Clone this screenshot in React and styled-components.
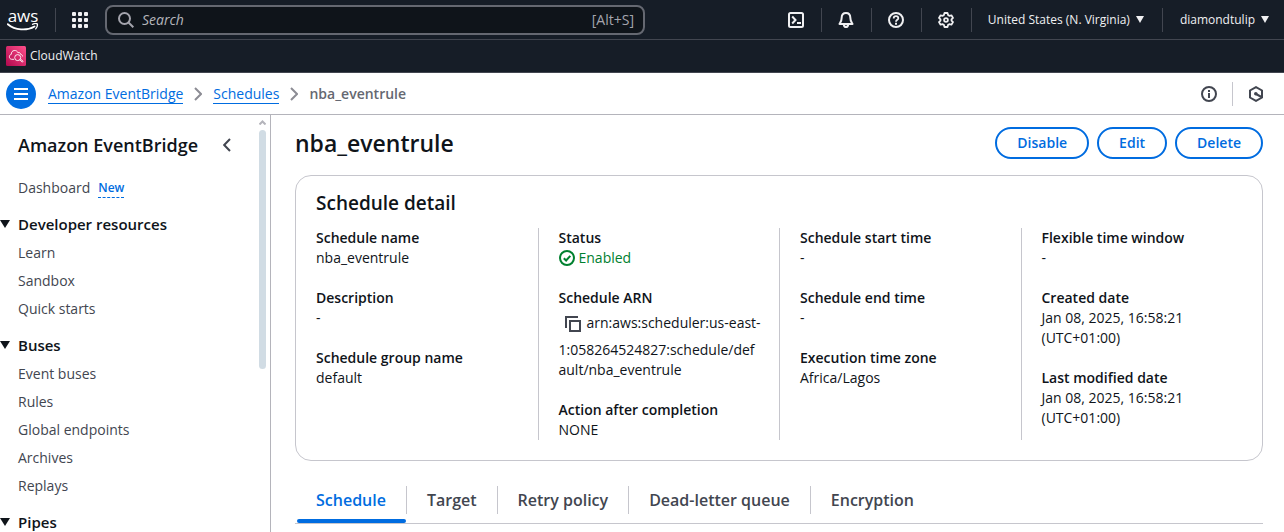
import React from 'react';
import styled, { createGlobalStyle, css } from 'styled-components';

const color = {
  nav: '#161d27',
  navLine: '#424650',
  navText: '#f0f0f2',
  blue: '#006ce0',
  text: '#0f141a',
  soft: '#424650',
  line: '#b4b4bb',
  cardLine: '#c6c6cd',
  green: '#00802f',
};

const GlobalStyle = createGlobalStyle`
  *, *::before, *::after { box-sizing: border-box; }
  body {
    margin: 0;
    background: #fff;
    color: ${color.text};
    font-family: "Open Sans", "Noto Sans", sans-serif;
    font-size: 14px;
    line-height: 20px;
  }
  h1, h2, ul, ol, dl, dd { margin: 0; padding: 0; }
  ul, ol { list-style: none; }
  button { font: inherit; color: inherit; background: none; border: 0; padding: 0; cursor: pointer; }
  a { color: inherit; text-decoration: none; }
  svg { display: block; flex: none; }
`;

const Page = styled.div`
  display: flex;
  flex-direction: column;
  height: 100vh;
  overflow: hidden;
`;

const TopNav = styled.header`
  display: flex;
  align-items: center;
  flex: none;
  height: 40px;
  padding: 0 7px;
  background: ${color.nav};
  border-bottom: 1px solid ${color.navLine};
  color: ${color.navText};
`;

const Logo = styled.a`
  display: flex;
  flex-direction: column;
  align-items: center;
  width: 32px;
  margin-right: 16px;
  font-size: 17px;
  font-weight: 500;
  line-height: 14px;
  color: #fff;
`;

const Rule = styled.span`
  flex: none;
  width: 1px;
  height: 24px;
  background: ${(p) => (p.$light ? color.cardLine : color.navLine)};
`;

const GridButton = styled.button`
  margin: 0 17px 0 16px;
`;

const SearchBox = styled.label`
  display: flex;
  align-items: center;
  flex: 0 1 540px;
  height: 30px;
  padding: 0 9px 0 11px;
  gap: 8px;
  border: 2px solid #656871;
  border-radius: 8px;
  background: #0f141a;
  color: #a4a4ad;
`;

const SearchInput = styled.input`
  flex: 1;
  min-width: 0;
  padding: 0;
  border: 0;
  outline: 0;
  background: none;
  font: inherit;
  color: inherit;
  &::placeholder { color: #b4b4bb; font-style: italic; opacity: 1; }
`;

const NavTools = styled.div`
  display: flex;
  align-items: center;
  margin-left: auto;
`;

const IconButton = styled.button`
  display: grid;
  place-items: center;
  width: 49px;
  height: 32px;
`;

const NavMenu = styled.button`
  display: flex;
  align-items: center;
  gap: 6px;
  padding: ${(p) => (p.$last ? '0 8px 0 17px' : '0 18px 0 16px')};
  font-size: 12px;
  font-weight: 500;
  white-space: nowrap;
`;

const Favorites = styled.nav`
  display: flex;
  align-items: center;
  flex: none;
  height: 33px;
  padding: 0 6px;
  background: ${color.nav};
  border-bottom: 1px solid ${color.navLine};
`;

const Favorite = styled.a`
  display: flex;
  align-items: center;
  gap: 4px;
  color: ${color.navText};
  font-size: 12px;
  font-weight: 500;
`;

const CrumbBar = styled.div`
  display: flex;
  align-items: center;
  flex: none;
  height: 42px;
  padding: 0 20px 0 6px;
  border-bottom: 1px solid ${color.line};
  color: ${color.soft};
`;

const MenuButton = styled.button`
  display: grid;
  place-items: center;
  width: 30px;
  height: 30px;
  margin-right: 12px;
  border-radius: 50%;
  background: ${color.blue};
`;

const Crumbs = styled.ol`
  display: flex;
  align-items: center;
  flex: 1;
  gap: 11px;
`;

const Crumb = styled.li`
  display: flex;
  align-items: center;
  gap: 11px;
  color: #656871;
  font-weight: 600;
  a {
    color: ${color.blue};
    font-weight: 400;
    line-height: 19px;
    border-bottom: 1px solid ${color.blue};
  }
`;

const CrumbTools = styled.div`
  display: flex;
  align-items: center;
  gap: 15px;
`;

const Body = styled.div`
  display: flex;
  flex: 1;
  min-height: 0;
`;

const Sidebar = styled.aside`
  display: flex;
  flex: none;
  width: 271px;
  border-right: 1px solid ${color.line};
`;

const SideContent = styled.nav`
  flex: 1;
  min-width: 0;
  overflow: hidden;
  padding-top: 18px;
`;

const SideHead = styled.div`
  display: flex;
  align-items: center;
  justify-content: space-between;
  height: 24px;
  padding: 0 28px 0 18px;
  margin-bottom: 21px;
  font-size: 18px;
  font-weight: 600;
  white-space: nowrap;
`;

const SideLink = styled.a`
  display: flex;
  align-items: center;
  gap: 8px;
  height: 20px;
  margin: 0 18px 8px;
  color: ${color.soft};
`;

const NewTag = styled.span`
  border-bottom: 1px dashed ${color.blue};
  color: ${color.blue};
  font-size: 12px;
  font-weight: 600;
  line-height: 18px;
`;

const SectionButton = styled.button`
  display: flex;
  align-items: center;
  gap: 8px;
  height: 20px;
  margin: 16px 0 9px;
  font-size: 15px;
  font-weight: 600;
`;

const ScrollTrack = styled.div`
  display: flex;
  flex-direction: column;
  align-items: center;
  flex: none;
  gap: 5px;
  width: 11px;
  padding: 5px 4px 0 0;
`;

const ScrollThumb = styled.div`
  width: 7px;
  height: 58%;
  border-radius: 4px;
  background: #d1dce4;
`;

const Main = styled.main`
  flex: 1;
  min-width: 0;
  overflow: hidden;
  padding: 12px 21px 0 24px;
`;

const TitleRow = styled.div`
  display: flex;
  align-items: center;
  justify-content: space-between;
  margin-bottom: 16px;
`;

const Title = styled.h1`
  font-size: 23px;
  font-weight: 600;
  line-height: 32px;
`;

const Actions = styled.div`
  display: flex;
  gap: 8px;
`;

const ActionButton = styled.button`
  height: 32px;
  padding: 0 20px;
  border: 2px solid ${color.blue};
  border-radius: 20px;
  color: ${color.blue};
  font-weight: 600;
`;

const Card = styled.section`
  padding: 15px 0 20px;
  border: 1px solid ${color.cardLine};
  border-radius: 16px;
`;

const CardTitle = styled.h2`
  padding: 0 20px;
  margin-bottom: 13px;
  font-size: 19px;
  font-weight: 600;
  line-height: 24px;
`;

const Columns = styled.div`
  display: grid;
  grid-template-columns: repeat(4, minmax(0, 1fr));
`;

const Column = styled.dl`
  display: flex;
  flex-direction: column;
  gap: 20px;
  padding: 0 20px;
  & + & { border-left: 1px solid ${color.cardLine}; }
`;

const Term = styled.dt`
  font-weight: 600;
`;

const Value = styled.dd`
  overflow-wrap: break-word;
  ${(p) => p.$breakAll && css`word-break: break-all;`}
`;

const ArnLead = styled.span`
  white-space: nowrap;
`;

const Status = styled.span`
  display: flex;
  align-items: center;
  gap: 4px;
  color: ${color.green};
`;

const CopyButton = styled.button`
  display: inline-grid;
  place-items: center;
  width: 28px;
  height: 32px;
  vertical-align: middle;
  color: ${color.soft};
`;

const Tabs = styled.div`
  display: flex;
  margin-top: 24px;
  padding-left: 1px;
  border-bottom: 1px solid ${color.cardLine};
`;

const Tab = styled.button`
  position: relative;
  height: 38px;
  padding-bottom: 8px;
  font-size: 16px;
  font-weight: 600;
  line-height: 28px;
  color: ${(p) => (p.$active ? color.blue : color.soft)};
  ${(p) => p.$active && css`
    &::after {
      content: "";
      position: absolute;
      left: 1px;
      right: 1px;
      bottom: 0;
      height: 4px;
      border-radius: 2px;
      background: ${color.blue};
    }
  `}
  span {
    display: block;
    padding: 0 20px;
    border-right: 1px solid ${color.cardLine};
  }
  &:last-child span { border-right: 0; }
`;

const Icon = ({ size = 16, children, ...rest }) => (
  <svg width={size} height={size} viewBox="0 0 16 16" fill="none" stroke="currentColor" strokeWidth="2" aria-hidden="true" {...rest}>
    {children}
  </svg>
);

const Caret = ({ width = 8, height = 7 }) => (
  <svg width={width} height={height} viewBox="0 0 10 8" preserveAspectRatio="none" aria-hidden="true">
    <path d="M0 0h10L5 8z" fill="currentColor" />
  </svg>
);

const CrumbArrow = () => (
  <svg width="8" height="14" viewBox="0 0 8 14" fill="none" stroke="#8c8c94" strokeWidth="2" aria-hidden="true">
    <path d="M1 1l6 6-6 6" />
  </svg>
);

const sections = [
  { title: 'Developer resources', links: ['Learn', 'Sandbox', 'Quick starts'] },
  { title: 'Buses', links: ['Event buses', 'Rules', 'Global endpoints', 'Archives', 'Replays'] },
  { title: 'Pipes', links: [] },
];

const tabs = ['Schedule', 'Target', 'Retry policy', 'Dead-letter queue', 'Encryption'];

const Field = ({ label, breakAll, children }) => (
  <div>
    <Term>{label}</Term>
    <Value $breakAll={breakAll}>{children}</Value>
  </div>
);

export default function App() {
  return (
    <Page>
      <GlobalStyle />
      <TopNav>
        <Logo href="#">
          aws
          <svg width="32" height="8" viewBox="0 0 32 8" aria-hidden="true">
            <path d="M.8 1.2C8 7.4 20 8 27.5 3.4" fill="none" stroke="#fff" strokeWidth="1.8" strokeLinecap="round" />
            <path d="M25.5 1.3c2-.9 4-.9 4.800-.4.4 1.500-.3 3.500-1.600 5" fill="none" stroke="#fff" strokeWidth="1.3" strokeLinecap="round" />
          </svg>
        </Logo>
        <Rule />
        <GridButton aria-label="Services">
          <svg width="16" height="16" viewBox="0 0 16 16" fill="currentColor" aria-hidden="true">
            {[0, 6, 12].map((y) => [0, 6, 12].map((x) => <rect key={`${x}-${y}`} x={x} y={y} width="4" height="4" rx="1" />))}
          </svg>
        </GridButton>
        <SearchBox>
          <Icon>
            <circle cx="6.5" cy="6.5" r="5.5" />
            <path d="M10.5 10.5l4.8 4.8" />
          </Icon>
          <SearchInput type="text" placeholder="Search" aria-label="Search" />
          <span>[Alt+S]</span>
        </SearchBox>
        <NavTools>
          <IconButton aria-label="CloudShell">
            <Icon>
              <rect x="1" y="1" width="14" height="14" rx="1.5" />
              <path d="M4.2 4.5L7.5 8 4.2 11.5M9 11H13" />
            </Icon>
          </IconButton>
          <Rule />
          <IconButton aria-label="Notifications">
            <Icon>
              <path d="M8 1C5.2 1 3.7 3 3.7 5.6 3.7 9 2.5 10.2 1.5 12h13c-1-1.800-2.200-3-2.200-6.400C12.3 3 10.8 1 8 1z" strokeLinejoin="round" />
              <path d="M5.8 12.5c.2 1.500 1 2.500 2.200 2.500s2-1 2.200-2.500" />
            </Icon>
          </IconButton>
          <Rule />
          <IconButton aria-label="Help">
            <Icon>
              <circle cx="8" cy="8" r="7" />
              <path d="M5.7 6.5C5.7 5 6.7 4.2 8 4.2s2.3.8 2.3 2C10.3 7.9 8 7.8 8 9.8" strokeWidth="1.8" />
              <path d="M8 10.800v2" />
            </Icon>
          </IconButton>
          <Rule />
          <IconButton aria-label="Settings">
            <Icon>
              <path d="M6.5 1h3l.6 2.100 1.200.7 2.100-.5L15 5.900 13.500 7.400v1.200L15 10.100l-1.600 2.600-2.100-.5-1.200.7L9.500 15h-3l-.6-2.100-1.200-.7-2.100.5L1 10.100l1.500-1.500V7.400L1 5.900l1.600-2.600 2.100.5 1.200-.7z" strokeLinejoin="round" strokeWidth="1.8" />
              <circle cx="8" cy="8" r="1.9" strokeWidth="1.8" />
            </Icon>
          </IconButton>
          <Rule />
          <NavMenu>United States (N. Virginia) <Caret /></NavMenu>
          <Rule />
          <NavMenu $last>diamondtulip <Caret /></NavMenu>
        </NavTools>
      </TopNav>

      <Favorites aria-label="Favorites">
        <Favorite href="#">
          <svg width="20" height="20" viewBox="0 0 20 20" fill="none" aria-hidden="true">
            <defs>
              <linearGradient id="cw" x1="0" y1="20" x2="20" y2="0" gradientUnits="userSpaceOnUse">
                <stop stopColor="#b0084d" />
                <stop offset="1" stopColor="#ff4f8b" />
              </linearGradient>
            </defs>
            <rect width="20" height="20" rx="1.5" fill="url(#cw)" />
            <path d="M8 13.300H5.600C4.200 13.100 3.300 12.100 3.400 10.700c0-1.300.8-2.100 1.900-2.400C5.200 6.300 6.300 4.800 8.200 4.500c1.800-.2 3.100.6 3.800 2.300 1.300-.7 2.400 0 2.600 1.500 1.200.2 2 .9 2 2.200" stroke="#fff" strokeWidth=".9" />
            <circle cx="11.7" cy="11.6" r="3" stroke="#fff" strokeWidth=".9" />
            <path d="M13.7 13.9l2.700 2.200.7-.8-2.600-2.300" stroke="#fff" strokeWidth=".9" />
          </svg>
          CloudWatch
        </Favorite>
      </Favorites>

      <CrumbBar>
        <MenuButton aria-label="Open navigation">
          <Icon stroke="#fff"><path d="M1 3h14M1 8h14M1 13h14" /></Icon>
        </MenuButton>
        <Crumbs>
          <Crumb><a href="#">Amazon EventBridge</a><CrumbArrow /></Crumb>
          <Crumb><a href="#">Schedules</a><CrumbArrow /></Crumb>
          <Crumb>nba_eventrule</Crumb>
        </Crumbs>
        <CrumbTools>
          <button aria-label="Info">
            <Icon>
              <circle cx="8" cy="8" r="7" />
              <path d="M8 7v5M8 4v2" />
            </Icon>
          </button>
          <Rule $light />
          <button aria-label="Diagnostics">
            <Icon>
              <path d="M8 1.100l6 3.400v7L8 14.900l-6-3.400v-7z" />
              <circle cx="7.8" cy="7.8" r="1.8" fill="currentColor" stroke="none" />
              <path d="M8 8l5.500 3" />
            </Icon>
          </button>
        </CrumbTools>
      </CrumbBar>

      <Body>
        <Sidebar>
          <SideContent aria-label="Amazon EventBridge">
            <SideHead>
              Amazon EventBridge
              <button aria-label="Close navigation">
                <svg width="8" height="14" viewBox="0 0 8 14" fill="none" stroke={color.soft} strokeWidth="2" aria-hidden="true">
                  <path d="M7 1L1.200 7 7 13" />
                </svg>
              </button>
            </SideHead>
            <SideLink href="#">Dashboard <NewTag>New</NewTag></SideLink>
            {sections.map((section) => (
              <div key={section.title}>
                <SectionButton aria-expanded="true"><Caret width={10} height={8} />{section.title}</SectionButton>
                <ul>
                  {section.links.map((link) => (
                    <li key={link}><SideLink href="#">{link}</SideLink></li>
                  ))}
                </ul>
              </div>
            ))}
          </SideContent>
          <ScrollTrack aria-hidden="true">
            <svg width="7" height="5" viewBox="0 0 7 5" fill="none" stroke="#b4b4bb" strokeWidth="2"><path d="M.5 4.500l3-3 3 3" /></svg>
            <ScrollThumb />
          </ScrollTrack>
        </Sidebar>

        <Main>
          <TitleRow>
            <Title>nba_eventrule</Title>
            <Actions>
              <ActionButton>Disable</ActionButton>
              <ActionButton>Edit</ActionButton>
              <ActionButton>Delete</ActionButton>
            </Actions>
          </TitleRow>

          <Card>
            <CardTitle>Schedule detail</CardTitle>
            <Columns>
              <Column>
                <Field label="Schedule name">nba_eventrule</Field>
                <Field label="Description">-</Field>
                <Field label="Schedule group name">default</Field>
              </Column>
              <Column>
                <Field label="Status">
                  <Status>
                    <Icon><circle cx="8" cy="8" r="7" /><path d="M4.800 8.200l2.300 2.300 4.200-4.700" /></Icon>
                    Enabled
                  </Status>
                </Field>
                <Field label="Schedule ARN" breakAll>
                  <ArnLead>
                    <CopyButton aria-label="Copy ARN">
                      <Icon><path d="M1 12V1h12" /><path d="M5 5h10v10H5z" /></Icon>
                    </CopyButton>
                    arn:aws:scheduler:us-east-
                  </ArnLead>
                  <wbr />
                  1:058264524827:schedule/default/nba_eventrule
                </Field>
                <Field label="Action after completion">NONE</Field>
              </Column>
              <Column>
                <Field label="Schedule start time">-</Field>
                <Field label="Schedule end time">-</Field>
                <Field label="Execution time zone">Africa/Lagos</Field>
              </Column>
              <Column>
                <Field label="Flexible time window">-</Field>
                <Field label="Created date">Jan 08, 2025, 16:58:21 (UTC+01:00)</Field>
                <Field label="Last modified date">Jan 08, 2025, 16:58:21 (UTC+01:00)</Field>
              </Column>
            </Columns>
          </Card>

          <Tabs role="tablist">
            {tabs.map((tab, i) => (
              <Tab key={tab} role="tab" aria-selected={i === 0} $active={i === 0}><span>{tab}</span></Tab>
            ))}
          </Tabs>
        </Main>
      </Body>
    </Page>
  );
}
